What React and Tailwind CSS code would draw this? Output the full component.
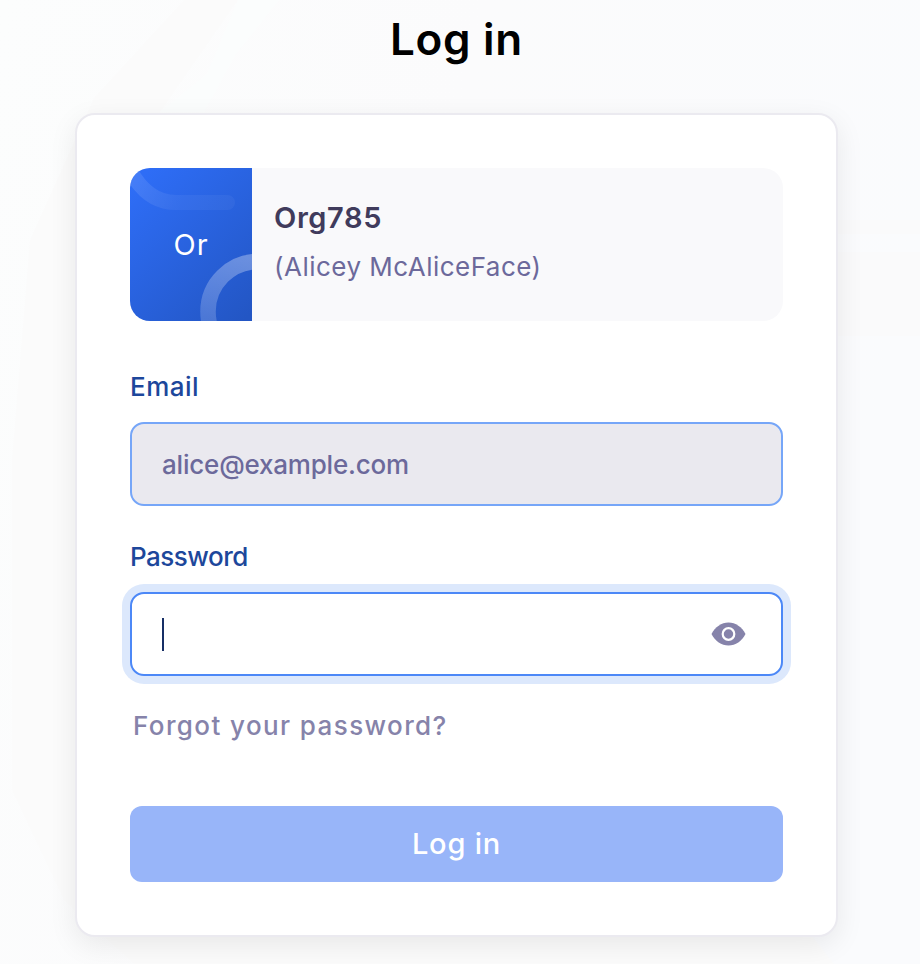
function Backdrop() {
  return (
    <svg className="absolute inset-0 h-full w-full" viewBox="0 0 920 964" fill="none" aria-hidden="true">
      <defs>
        <linearGradient id="page" x1="0" y1="0" x2="1" y2="0.25">
          <stop offset="0" stopColor="#fcfdfd" />
          <stop offset="0.5" stopColor="#fbfbfc" />
          <stop offset="1" stopColor="#fafbfd" />
        </linearGradient>
      </defs>
      <rect width="920" height="964" fill="url(#page)" />
      <path d="M184 0 94 98 30 240 12 460v330l52 110 70 64h700L160 112 238 0Z" fill="#fbfbfb" />
      <path d="M238 0 207 74 160 112h44L236 54 279 0Z" fill="#fbfdfd" />
      <path d="M836 220h84v14h-84zM836 252h84v84h-84z" fill="#fafafb" />
    </svg>
  );
}

function OrgTile() {
  return (
    <div className="relative flex h-full w-[122px] shrink-0 items-center justify-center">
      <svg className="absolute inset-0" width="122" height="153" viewBox="0 0 122 153" fill="none" aria-hidden="true">
        <defs>
          <linearGradient id="tile" x1="0" y1="20" x2="122" y2="145" gradientUnits="userSpaceOnUse">
            <stop stopColor="#2e6df6" />
            <stop offset="1" stopColor="#2356c4" />
          </linearGradient>
          <linearGradient id="swoosh" x1="0" y1="0" x2="105" y2="42" gradientUnits="userSpaceOnUse">
            <stop stopColor="#fff" stopOpacity="0.12" />
            <stop offset="0.5" stopColor="#fff" stopOpacity="0.05" />
            <stop offset="1" stopColor="#fff" stopOpacity="0.04" />
          </linearGradient>
          <linearGradient id="ring" x1="110" y1="86" x2="85" y2="153" gradientUnits="userSpaceOnUse">
            <stop stopColor="#fff" stopOpacity="0.32" />
            <stop offset="1" stopColor="#fff" stopOpacity="0.18" />
          </linearGradient>
        </defs>
        <rect width="122" height="153" fill="url(#tile)" />
        <path d="M-3 -4C8 20 24 34.500 46 34.500H97.500" stroke="url(#swoosh)" strokeWidth="15" strokeLinecap="round" />
        <circle cx="128" cy="143.500" r="50" stroke="url(#ring)" strokeWidth="15.500" />
      </svg>
      <span className="relative text-[29px] leading-[34px] tracking-[1px] text-white">Or</span>
    </div>
  );
}

function EyeIcon() {
  return (
    <svg width="35" height="24" viewBox="0 0 35 24" fill="none" aria-hidden="true">
      <path d="M0.500 12C4 5 10.500 0.500 17.500 0.500S31 5 34.500 12C31 19 24.500 23.500 17.500 23.500S4 19 0.500 12Z" fill="#8683aa" />
      <circle cx="17.500" cy="12" r="5.800" stroke="#fff" strokeWidth="2.200" />
    </svg>
  );
}

export default function App() {
  return (
    <main className="relative h-[964px] w-full overflow-hidden font-['Inter',sans-serif]">
      <Backdrop />
      <div className="relative flex flex-col">
        <h1 className="mr-[7px] h-[113px] pt-[9px] text-center text-[44px] leading-[60px] font-semibold tracking-[0.7px] text-black">
          Log in
        </h1>
        <section className="ml-[75px] flex h-[824px] w-[763px] flex-col rounded-[20px] border-2 border-[#ebeaf0] bg-white p-[53px] shadow-[0_8px_28px_rgba(0,0,0,0.08)]">
          <div className="flex h-[153px] shrink-0 overflow-hidden rounded-[20px] bg-[#f9f9fb]">
            <OrgTile />
            <div className="pt-[25px] pl-[22px]">
              <p className="text-[29px] leading-[49px] font-semibold tracking-[0.6px] text-[#403b5c]">Org785</p>
              <p className="text-[26px] leading-[49px] tracking-[0.48px] text-[#6c699b]">(Alicey McAliceFace)</p>
            </div>
          </div>
          <label className="mt-[49px] text-[26px] leading-[34px] font-medium tracking-[0.5px] text-[#1d479b]">Email</label>
          <div className="mt-[18px] flex h-[84px] shrink-0 items-center rounded-[14px] border-2 border-[#76a6f8] bg-[#eae9ef] pl-[30px]">
            <span className="pt-px text-[26px] leading-[34px] font-medium tracking-[-0.2px] text-[#6c699b]">alice@example.com</span>
          </div>
          <label className="mt-[34px] text-[26px] leading-[34px] font-medium tracking-[-0.5px] text-[#1d479b]">Password</label>
          <div className="mt-[18px] flex h-[84px] shrink-0 items-center justify-between rounded-[14px] border-2 border-[#4c88f7] bg-white pr-[35px] pl-[30px] shadow-[0_0_0_8px_#dce8fc]">
            <span className="h-[33px] w-[2px] bg-[#172f66]" />
            <EyeIcon />
          </div>
          <a className="mt-[33px] pl-[3px] text-[26px] leading-[34px] font-medium tracking-[1.4px] text-[#8683aa]">
            Forgot your password?
          </a>
          <button className="mt-[63px] h-[76px] shrink-0 rounded-[12px] bg-[#98b5f9] text-[29px] font-medium tracking-[0.8px] text-white">
            Log in
          </button>
        </section>
      </div>
    </main>
  );
}
